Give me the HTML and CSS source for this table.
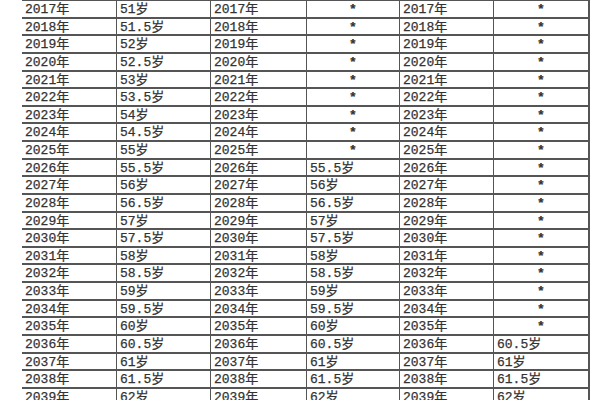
FILE: index.html
```html
<!DOCTYPE html>
<html lang="zh-CN">
<head>
<meta charset="utf-8">
<title>退休年龄表</title>
<link rel="stylesheet" href="styles.css">
</head>
<body>
<div class="sheet">
<div class="c">2017年</div><div class="c">51岁</div><div class="c">2017年</div><div class="c m">*</div><div class="c">2017年</div><div class="c m">*</div>
<div class="c">2018年</div><div class="c">51.5岁</div><div class="c">2018年</div><div class="c m">*</div><div class="c">2018年</div><div class="c m">*</div>
<div class="c">2019年</div><div class="c">52岁</div><div class="c">2019年</div><div class="c m">*</div><div class="c">2019年</div><div class="c m">*</div>
<div class="c">2020年</div><div class="c">52.5岁</div><div class="c">2020年</div><div class="c m">*</div><div class="c">2020年</div><div class="c m">*</div>
<div class="c">2021年</div><div class="c">53岁</div><div class="c">2021年</div><div class="c m">*</div><div class="c">2021年</div><div class="c m">*</div>
<div class="c">2022年</div><div class="c">53.5岁</div><div class="c">2022年</div><div class="c m">*</div><div class="c">2022年</div><div class="c m">*</div>
<div class="c">2023年</div><div class="c">54岁</div><div class="c">2023年</div><div class="c m">*</div><div class="c">2023年</div><div class="c m">*</div>
<div class="c">2024年</div><div class="c">54.5岁</div><div class="c">2024年</div><div class="c m">*</div><div class="c">2024年</div><div class="c m">*</div>
<div class="c">2025年</div><div class="c">55岁</div><div class="c">2025年</div><div class="c m">*</div><div class="c">2025年</div><div class="c m">*</div>
<div class="c">2026年</div><div class="c">55.5岁</div><div class="c">2026年</div><div class="c">55.5岁</div><div class="c">2026年</div><div class="c m">*</div>
<div class="c">2027年</div><div class="c">56岁</div><div class="c">2027年</div><div class="c">56岁</div><div class="c">2027年</div><div class="c m">*</div>
<div class="c">2028年</div><div class="c">56.5岁</div><div class="c">2028年</div><div class="c">56.5岁</div><div class="c">2028年</div><div class="c m">*</div>
<div class="c">2029年</div><div class="c">57岁</div><div class="c">2029年</div><div class="c">57岁</div><div class="c">2029年</div><div class="c m">*</div>
<div class="c">2030年</div><div class="c">57.5岁</div><div class="c">2030年</div><div class="c">57.5岁</div><div class="c">2030年</div><div class="c m">*</div>
<div class="c">2031年</div><div class="c">58岁</div><div class="c">2031年</div><div class="c">58岁</div><div class="c">2031年</div><div class="c m">*</div>
<div class="c">2032年</div><div class="c">58.5岁</div><div class="c">2032年</div><div class="c">58.5岁</div><div class="c">2032年</div><div class="c m">*</div>
<div class="c">2033年</div><div class="c">59岁</div><div class="c">2033年</div><div class="c">59岁</div><div class="c">2033年</div><div class="c m">*</div>
<div class="c">2034年</div><div class="c">59.5岁</div><div class="c">2034年</div><div class="c">59.5岁</div><div class="c">2034年</div><div class="c m">*</div>
<div class="c">2035年</div><div class="c">60岁</div><div class="c">2035年</div><div class="c">60岁</div><div class="c">2035年</div><div class="c m">*</div>
<div class="c">2036年</div><div class="c">60.5岁</div><div class="c">2036年</div><div class="c">60.5岁</div><div class="c">2036年</div><div class="c">60.5岁</div>
<div class="c">2037年</div><div class="c">61岁</div><div class="c">2037年</div><div class="c">61岁</div><div class="c">2037年</div><div class="c">61岁</div>
<div class="c">2038年</div><div class="c">61.5岁</div><div class="c">2038年</div><div class="c">61.5岁</div><div class="c">2038年</div><div class="c">61.5岁</div>
<div class="c">2039年</div><div class="c">62岁</div><div class="c">2039年</div><div class="c">62岁</div><div class="c">2039年</div><div class="c">62岁</div>
</div>
</body>
</html>
```

FILE: styles.css
```css
html, body {
  margin: 0;
  padding: 0;
  background: #ffffff;
  overflow: hidden;
  width: 600px;
  height: 400px;
}

.sheet {
  margin-left: 22px;
  width: 567px;
  display: grid;
  grid-template-columns: 94px 93px 95px 92px 93px 94px;
  grid-auto-rows: 15.64px;
  column-gap: 1px;
  row-gap: 2px;
  padding: 1px 1px 0 0;
  background: #555555;
  font-family: "Liberation Mono", "Noto Sans CJK SC", monospace;
  font-size: 13px;
  color: #333333;
  -webkit-text-stroke: 0.25px #333333;
}

.c {
  background: #ffffff;
  padding: 1px 0 0 3px;
  line-height: 15px;
  white-space: nowrap;
  overflow: hidden;
}

.m {
  text-align: center;
  padding-left: 0;
  font-weight: bold;
}
```
